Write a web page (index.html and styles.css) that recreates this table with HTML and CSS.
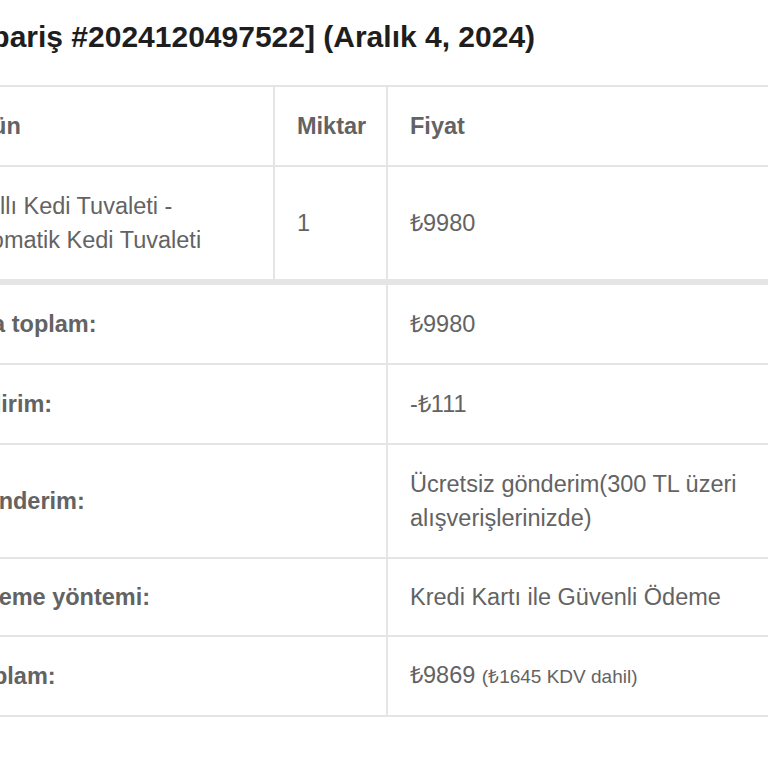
FILE: index.html
```html
<!DOCTYPE html>
<html lang="tr">
<head>
<meta charset="utf-8">
<title>Sipariş #2024120497522</title>
<link rel="stylesheet" href="styles.css">
</head>
<body>
<div class="email">
  <h2 class="order-title">[Sipariş #2024120497522] (Aralık 4, 2024)</h2>
  <table class="order-table">
    <colgroup>
      <col class="col-product">
      <col class="col-qty">
      <col class="col-price">
    </colgroup>
    <thead>
      <tr><th>Ürün</th><th>Miktar</th><th>Fiyat</th></tr>
    </thead>
    <tbody>
      <tr><td>Akıllı Kedi Tuvaleti - Otomatik Kedi Tuvaleti</td><td>1</td><td>₺9980</td></tr>
    </tbody>
    <tfoot>
      <tr class="first"><th colspan="2">Ara toplam:</th><td>₺9980</td></tr>
      <tr><th colspan="2">İndirim:</th><td>-₺111</td></tr>
      <tr><th colspan="2">Gönderim:</th><td>Ücretsiz gönderim(300 TL üzeri alışverişlerinizde)</td></tr>
      <tr class="short"><th colspan="2">Ödeme yöntemi:</th><td>Kredi Kartı ile Güvenli Ödeme</td></tr>
      <tr class="short"><th colspan="2">Toplam:</th><td>₺9869 <small class="tax">(₺1645 KDV dahil)</small></td></tr>
    </tfoot>
  </table>
</div>
</body>
</html>
```
FILE: styles.css
```css
html {
  overflow: hidden;
  background: #ffffff;
}
body {
  margin: 0;
  background: #ffffff;
  font-family: "Liberation Sans", Arial, Helvetica, sans-serif;
}
.email {
  margin-left: -55px;
  padding-top: 17px;
  width: 900px;
}
.order-title {
  margin: 0 0 29px 8px;
  font-size: 30px;
  line-height: 39px;
  font-weight: bold;
  color: #1e1e1e;
}
.order-table {
  width: 903px;
  margin-left: -3px;
  table-layout: fixed;
  border-collapse: collapse;
  border: 2px solid #e5e5e5;
  color: #636363;
  font-size: 23.5px;
  line-height: 34px;
}
.col-product { width: 331px; }
.col-qty { width: 113px; }
.order-table th,
.order-table td {
  border: 2px solid #e5e5e5;
  padding: 22px;
  text-align: left;
  vertical-align: middle;
}
.order-table th {
  font-weight: bold;
}
.order-table tfoot tr.first th,
.order-table tfoot tr.first td {
  border-top-width: 6px;
}
.order-table tfoot tr.short th,
.order-table tfoot tr.short td {
  padding-top: 21px;
  padding-bottom: 21px;
}
.tax {
  font-size: 19px;
}
```
